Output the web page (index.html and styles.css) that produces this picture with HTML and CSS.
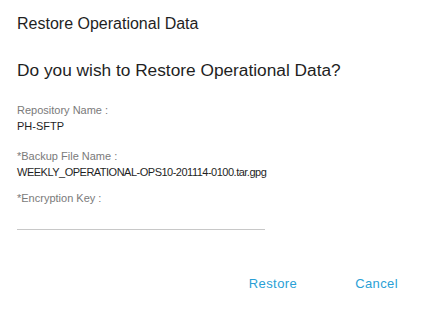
FILE: index.html
```html
<!doctype html>
<html lang="en">
<head>
	<meta charset="UTF-8">
	<title>Restore Operational Data</title>
	<link rel="stylesheet" href="styles.css">
</head>
<body>
	<div class="dialog">
		<h1 class="title">Restore Operational Data</h1>
		<h2 class="question">Do you wish to Restore Operational Data?</h2>
		<div class="field repo">
			<div class="label">Repository Name :</div>
			<div class="value">PH-SFTP</div>
		</div>
		<div class="field backup">
			<div class="label">*Backup File Name :</div>
			<div class="value file">WEEKLY_OPERATIONAL-OPS10-201114-0100.tar.gpg</div>
		</div>
		<div class="field secret">
			<div class="label">*Encryption Key :</div>
			<input class="key" type="password">
		</div>
		<div class="actions">
			<button class="btn">Restore</button>
			<button class="btn">Cancel</button>
		</div>
	</div>
</body>
</html>
```

FILE: styles.css
```css
*{
	margin: 0;
	padding: 0;
	box-sizing: border-box;
}
body{
	background: #fff;
	font-family: "Liberation Sans", Arial, sans-serif;
	color: #222;
}
.dialog{
	width: 442px;
	height: 322px;
	padding: 14px 17px 0 17px;
}
.title{
	font-size: 16px;
	font-weight: normal;
	line-height: 20px;
	color: #1f1f1f;
}
.question{
	font-size: 17.3px;
	font-weight: normal;
	line-height: 22px;
	margin-top: 25px;
	color: #1f1f1f;
}
.repo{
	margin-top: 22px;
}
.backup{
	margin-top: 16px;
}
.secret{
	margin-top: 12px;
}
.label{
	font-size: 11px;
	line-height: 14px;
	color: #7a7a7a;
}
.value{
	font-size: 11px;
	line-height: 14px;
	margin-top: 2px;
	color: #1f1f1f;
}
.file{
	letter-spacing: -0.5px;
}
.key{
	display: block;
	width: 248px;
	height: 22px;
	margin-top: 3px;
	border: none;
	border-bottom: 1px solid #c8c8c8;
	outline: none;
	background: transparent;
}
.actions{
	display: flex;
	justify-content: flex-end;
	gap: 58px;
	margin-top: 46px;
	padding-right: 27px;
}
.btn{
	border: none;
	background: none;
	font-family: "Liberation Sans", Arial, sans-serif;
	font-size: 13px;
	letter-spacing: 0.4px;
	color: #2a9fd6;
	cursor: pointer;
}
```
